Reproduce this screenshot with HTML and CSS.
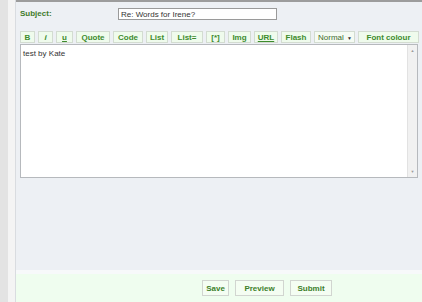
FILE: index.html
```html
<!DOCTYPE html>
<html lang="en">
<head>
    <meta charset="utf-8">
    <title>Post reply</title>
    <link rel="stylesheet" href="styles.css">
</head>
<body>
    <div class="page">
        <div class="side-strip"></div>
        <div class="main">
            <div class="post-panel">
                <div class="subject-row">
                    <label class="subject-label" for="subject">Subject:</label>
                    <input class="subject-input" type="text" id="subject" value="Re: Words for Irene?">
                </div>
                <div class="toolbar">
                    <span class="tb-btn tb-b">B</span>
                    <span class="tb-btn tb-i">i</span>
                    <span class="tb-btn tb-u">u</span>
                    <span class="tb-btn tb-quote">Quote</span>
                    <span class="tb-btn tb-code">Code</span>
                    <span class="tb-btn tb-list">List</span>
                    <span class="tb-btn tb-liste">List=</span>
                    <span class="tb-btn tb-star">[*]</span>
                    <span class="tb-btn tb-img">Img</span>
                    <span class="tb-btn tb-url">URL</span>
                    <span class="tb-btn tb-flash">Flash</span>
                    <span class="tb-select">Normal <span class="caret">&#9660;</span></span>
                    <span class="tb-btn tb-colour">Font colour</span>
                </div>
                <div class="message-box">
                    <div class="message-text">test by Kate</div>
                    <div class="scrollbar">
                        <span class="arrow">&#9650;</span>
                        <span class="arrow">&#9660;</span>
                    </div>
                </div>
            </div>
            <div class="divider"></div>
            <div class="footer">
                <span class="ft-btn ft-save">Save</span>
                <span class="ft-btn ft-preview">Preview</span>
                <span class="ft-btn ft-submit">Submit</span>
            </div>
        </div>
    </div>
</body>
</html>
```

FILE: styles.css
```css
html,
body {
    margin: 0;
    padding: 0;
    background: #ffffff;
    font-family: "Liberation Sans", Arial, sans-serif;
    font-size: 8px;
}

.page {
    display: flex;
    width: 422px;
    height: 302px;
    overflow: hidden;
}

.side-strip {
    width: 8px;
    background: #e3e3e3;
    border-right: 7px solid #f4f4f4;
    flex: none;
}

.main {
    flex: 1;
    display: flex;
    flex-direction: column;
    border-left: 1px solid #d9dce0;
}

.post-panel {
    height: 270px;
    background: #edf0f4;
    border-top: 2px solid #9c9c9c;
    padding-left: 4px;
    box-sizing: border-box;
}

.subject-row {
    display: flex;
    align-items: flex-start;
    padding-top: 6px;
    height: 23px;
    box-sizing: border-box;
}

.subject-label {
    width: 98px;
    font-weight: bold;
    color: #3f7a2a;
    line-height: 10px;
    padding-top: 1px;
}

.subject-input {
    width: 159px;
    height: 12px;
    margin: 0;
    padding: 0 0 0 2px;
    border: 1px solid #9a9a9a;
    box-sizing: border-box;
    font-family: "Liberation Sans", Arial, sans-serif;
    font-size: 8px;
    color: #333333;
    background: #ffffff;
}

.toolbar {
    display: flex;
    gap: 3px;
    margin-top: 6px;
    height: 13px;
}

.tb-btn,
.tb-select {
    height: 12px;
    line-height: 12px;
    background: #effbec;
    border: 1px solid #d3dcd1;
    box-sizing: border-box;
    color: #3d8b2d;
    font-weight: bold;
    text-align: center;
}

.tb-b { width: 15px; }
.tb-i { width: 15px; font-style: italic; }
.tb-u { width: 17px; text-decoration: underline; }
.tb-quote { width: 34px; }
.tb-code { width: 30px; }
.tb-list { width: 22px; }
.tb-liste { width: 32px; }
.tb-star { width: 19px; }
.tb-img { width: 23px; }
.tb-url { width: 24px; text-decoration: underline; }
.tb-flash { width: 30px; }
.tb-colour { width: 61px; }

.tb-select {
    width: 41px;
    font-weight: normal;
    background: #f5fbf3;
    color: #3d6b2d;
    text-align: left;
    padding-left: 3px;
}

.caret {
    font-size: 5px;
    color: #333333;
    margin-left: 1px;
}

.message-box {
    display: flex;
    width: 398px;
    height: 134px;
    margin-top: 0;
    background: #ffffff;
    border: 1px solid #b6b9bd;
    box-sizing: border-box;
}

.message-text {
    flex: 1;
    padding: 4px 0 0 2px;
    color: #333333;
    font-size: 8px;
}

.scrollbar {
    width: 9px;
    background: #f1f1f1;
    border-left: 1px solid #e2e2e2;
    display: flex;
    flex-direction: column;
    justify-content: space-between;
    align-items: center;
    padding: 3px 0;
}

.arrow {
    font-size: 4px;
    color: #9a9a9a;
}

.divider {
    height: 4px;
    background: #f7f9fa;
}

.footer {
    flex: 1;
    background: #effdef;
    display: flex;
    gap: 6px;
    padding: 6px 0 0 186px;
}

.ft-btn {
    height: 16px;
    line-height: 15px;
    background: #f4fdf2;
    border: 1px solid #d1d5d0;
    box-sizing: border-box;
    color: #3d7f2a;
    font-weight: bold;
    text-align: center;
}

.ft-save { width: 27px; }
.ft-preview { width: 49px; }
.ft-submit { width: 42px; }
```
